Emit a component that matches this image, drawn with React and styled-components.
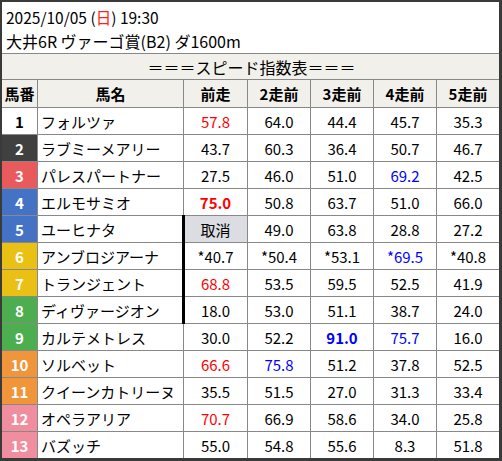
import React from 'react';
import styled, { createGlobalStyle, css } from 'styled-components';

const GlobalStyle = createGlobalStyle`
    html, body {
        margin: 0;
        padding: 0;
        background: #fff;
    }
    body {
        font-family: "Noto Sans CJK JP", "Noto Sans", sans-serif;
        font-size: 15px;
        color: #000;
    }
`;

// waku colours: bg / text
const WAKU = {
    1: ['#ffffff', '#000'],
    2: ['#404040', '#fff'],
    3: ['#e85a5c', '#fff'],
    4: ['#4472c4', '#fff'],
    5: ['#eac015', '#fff'],
    6: ['#4cae4f', '#fff'],
    7: ['#f0953a', '#fff'],
    8: ['#f08ea0', '#fff'],
};

const horses = [
    { no: 1, waku: 1, name: 'フォルツァ', v: [['57.8', 'red'], '64.0', '44.4', '45.7', '35.3'] },
    { no: 2, waku: 2, name: 'ラブミーメアリー', v: ['43.7', '60.3', '36.4', '50.7', '46.7'] },
    { no: 3, waku: 3, name: 'パレスパートナー', v: ['27.5', '46.0', '51.0', ['69.2', 'blue'], '42.5'] },
    { no: 4, waku: 4, name: 'エルモサミオ', v: [['75.0', 'red', true], '50.8', '63.7', '51.0', '66.0'] },
    { no: 5, waku: 4, name: 'ユーヒナタ', v: [['取消', 'cancel'], '49.0', '63.8', '28.8', '27.2'], mark: true },
    { no: 6, waku: 5, name: 'アンブロジアーナ', v: ['*40.7', '*50.4', '*53.1', ['*69.5', 'blue'], '*40.8'], mark: true },
    { no: 7, waku: 5, name: 'トランジェント', v: [['68.8', 'red'], '53.5', '59.5', '52.5', '41.9'], mark: true },
    { no: 8, waku: 6, name: 'ディヴァージオン', v: ['18.0', '53.0', '51.1', '38.7', '24.0'], mark: true },
    { no: 9, waku: 6, name: 'カルテメトレス', v: ['30.0', '52.2', ['91.0', 'blue', true], ['75.7', 'blue'], '16.0'] },
    { no: 10, waku: 7, name: 'ソルベット', v: [['66.6', 'red'], ['75.8', 'blue'], '51.2', '37.8', '52.5'] },
    { no: 11, waku: 7, name: 'クイーンカトリーヌ', v: ['35.5', '51.5', '27.0', '31.3', '33.4'] },
    { no: 12, waku: 8, name: 'オペラアリア', v: [['70.7', 'red'], '66.9', '58.6', '34.0', '25.8'] },
    { no: 13, waku: 8, name: 'バズッチ', v: ['55.0', '54.8', '55.6', '8.3', '51.8'] },
];

const Frame = styled.div`
    width: 502px;
    height: 461px;
    box-sizing: border-box;
    border-style: solid;
    border-color: #3a3a3a;
    border-width: 2px 3px 3px 2px;
    display: flex;
    flex-direction: column;
    background: #888;
    gap: 1px;
`;

const RaceHead = styled.div`
    height: 51px;
    box-sizing: border-box;
    padding: 3px 4px 0;
    background: #fff;
    line-height: 24px;
    font-size: 15.5px;
`;

const Line = styled.div`
    white-space: nowrap;
    ${p => p.$wide && css`font-size: 16px;`}
`;

const Sun = styled.span`
    color: #ff2020;
`;

const Grid = styled.div`
    display: grid;
    grid-template-columns: 35px 145px 63px 62px 62px 62px 62px;
    grid-template-rows: 25px 27px repeat(13, 26px);
    gap: 1px;
    background: #888;
`;

const Title = styled.div`
    grid-column: 1 / -1;
    background: #f2f0eb;
    display: flex;
    align-items: center;
    justify-content: center;
    padding-left: 2px;
    font-size: 16px;
`;

const HeadCell = styled.div`
    background: #f2f0eb;
    font-weight: bold;
    display: flex;
    align-items: center;
    justify-content: center;
    white-space: nowrap;
`;

const NoCell = styled.div`
    background: ${p => WAKU[p.$waku][0]};
    color: ${p => WAKU[p.$waku][1]};
    font-weight: bold;
    display: flex;
    align-items: center;
    justify-content: center;
`;

const NameCell = styled.div`
    background: #fff;
    display: flex;
    align-items: center;
    padding-left: 3px;
    white-space: nowrap;
    overflow: hidden;
`;

const ValCell = styled.div`
    position: relative;
    background: #fff;
    display: flex;
    align-items: center;
    justify-content: center;
    white-space: nowrap;
    ${p => p.$tone === 'red' && css`color: #ff0000;`}
    ${p => p.$tone === 'blue' && css`color: #0000ff;`}
    ${p => p.$tone === 'cancel' && css`background: #dcdce3;`}
    ${p => p.$bold && css`font-weight: bold;`}
    ${p => p.$mark && css`
        &::before {
            content: '';
            position: absolute;
            left: -2px;
            top: -1px;
            bottom: -1px;
            width: 3px;
            background: #000;
        }
    `}
`;

const heads = ['馬番', '馬名', '前走', '2走前', '3走前', '4走前', '5走前'];

const App = () => {
    return (
        <>
            <GlobalStyle />
            <Frame>
                <RaceHead>
                    <Line>2025/10/05 (<Sun>日</Sun>) 19:30</Line>
                    <Line $wide>大井6R ヴァーゴ賞(B2) ダ1600m</Line>
                </RaceHead>
                <Grid>
                    <Title>＝＝＝スピード指数表＝＝＝</Title>
                    {heads.map(h => (
                        <HeadCell key={h}>{h}</HeadCell>
                    ))}
                    {horses.map(h => (
                        <React.Fragment key={h.no}>
                            <NoCell $waku={h.waku}>{h.no}</NoCell>
                            <NameCell>{h.name}</NameCell>
                            {h.v.map((cell, i) => {
                                const [text, tone, bold] = Array.isArray(cell) ? cell : [cell];
                                return (
                                    <ValCell
                                        key={i}
                                        $tone={tone}
                                        $bold={bold}
                                        $mark={h.mark && i === 0}
                                    >
                                        {text}
                                    </ValCell>
                                );
                            })}
                        </React.Fragment>
                    ))}
                </Grid>
            </Frame>
        </>
    );
};

export default App;
